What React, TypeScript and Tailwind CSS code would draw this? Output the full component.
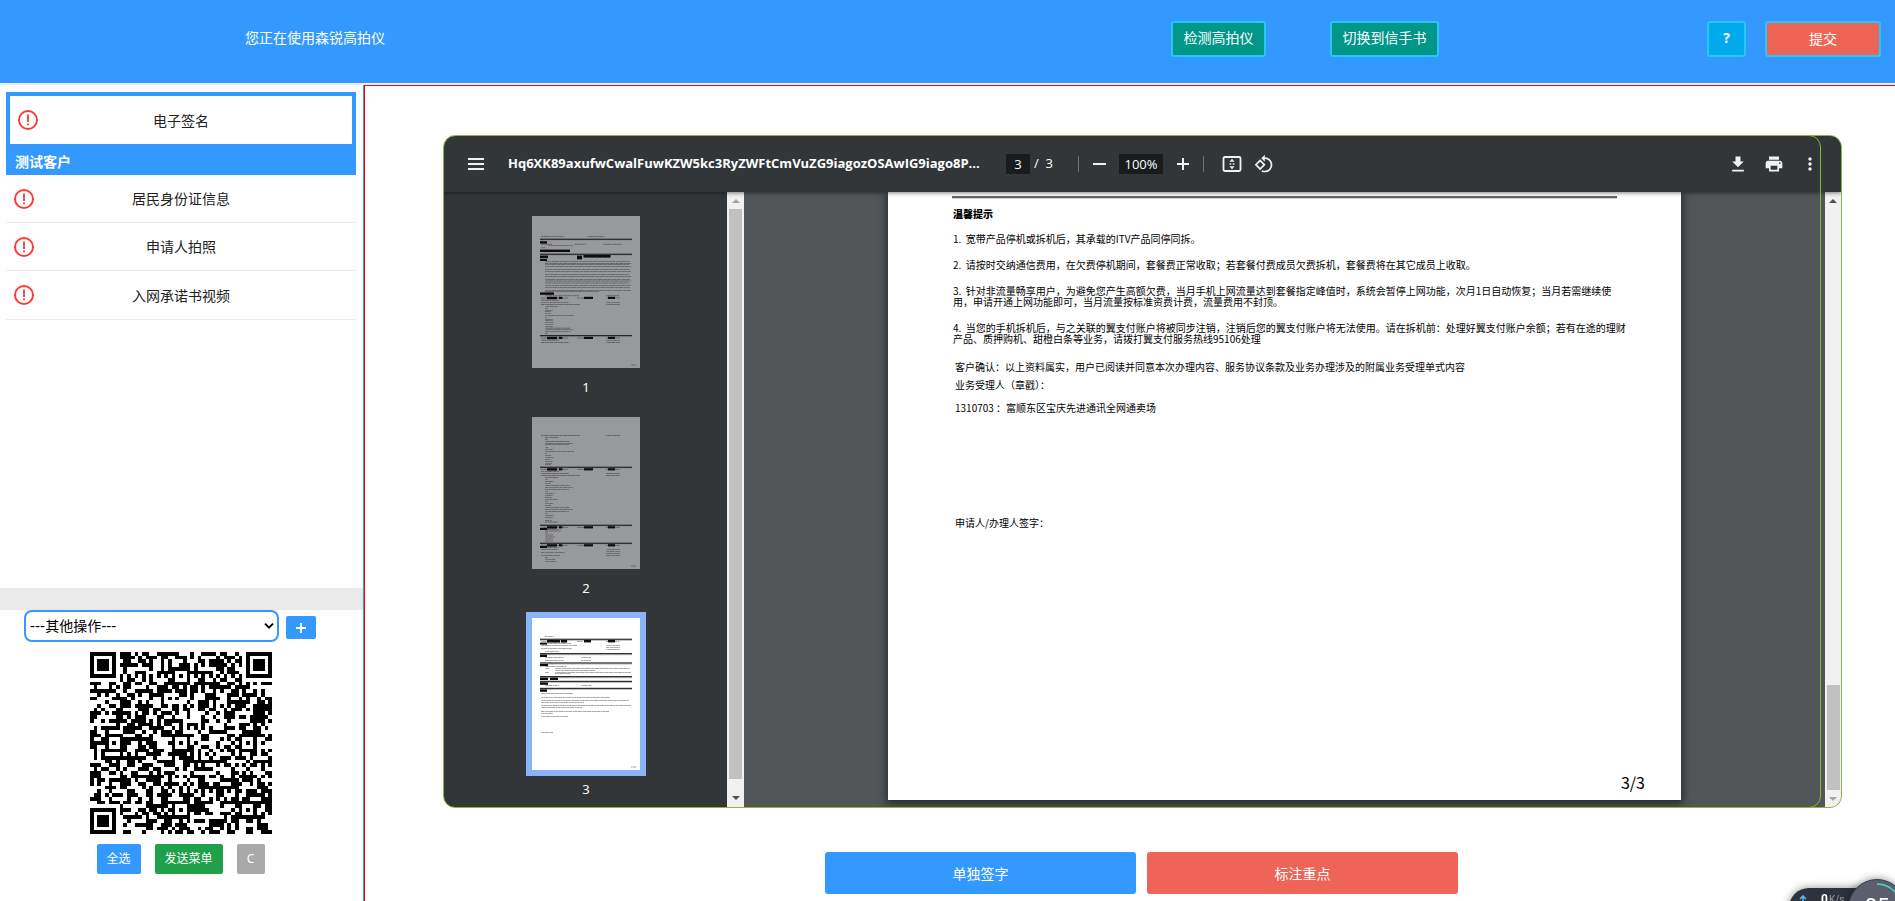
import React from "react";

type Bar = [x: number, y: number, w: number];
type Blob = [x: number, y: number, w: number, h: number];
type ThumbData = { rules: number[]; blobs: Blob[]; lines: Bar[] };

const steps = (xs: number, ys: number[], ws: number[]): Bar[] =>
  ys.map((y, i) => [xs, y, ws[i % ws.length]]);

const block = (y: number): Blob[] => [
  [15, y, 10, 2.4],
  [27, y, 3.4, 2.2],
  [52, y, 9, 2.2],
  [76, y, 7, 2.2],
];

const blockLines = (y: number): Bar[] => [
  [9, y + 1.2, 27],
  [45, y + 1.2, 7],
  [74, y + 1.2, 14],
  [9, y + 3.4, 18],
];

const thumbs: ThumbData[] = [
  {
    rules: [23.3, 38.3, 119.7],
    blobs: [
      [8, 25.2, 7, 2.4],
      [8, 33.6, 30, 2.4],
      [8, 39.6, 8, 2.6],
      [45, 39.6, 5, 3.8],
      [51.5, 39, 27, 2.6],
      [8, 43, 7, 2],
      [8, 76.4, 14, 2.4],
      ...block(80.8),
      ...block(120.8),
    ],
    lines: [
      [9, 20.5, 23],
      [55.5, 20.5, 17],
      [9, 28.3, 11],
      [16, 29.4, 25],
      [42, 28.3, 12],
      [71, 28.3, 19],
      [9, 31.7, 4],
      ...steps(13, [45.4, 47.5, 48.6, 50.6, 53.4, 55.4, 58.4, 60.6, 63.4, 65, 67, 69.4, 71.4, 74.4], [85, 86, 84, 86]),
      [13, 75.6, 54],
      [13, 79.7, 34],
      [74, 79.7, 13],
      ...blockLines(80.8),
      [9, 86.4, 28],
      [74, 86.4, 14],
      [9, 88.5, 39],
      [74, 88.5, 14],
      ...steps(13, [90.4, 92.4, 94.4, 95.4, 97.4, 99.4, 101.4, 103.4, 104.4, 106.4, 108.4, 110.4, 112.2, 113.6, 115.4, 117.4], [13, 3, 8, 6, 6, 29, 2, 8, 8, 9, 8, 8, 25, 28, 26, 3]),
      ...blockLines(120.8),
      [9, 126.5, 28],
      [74, 124.4, 14],
      [74, 126.5, 14],
      [99, 149, 5],
    ],
  },
  {
    rules: [50.3, 108.3, 126.3],
    blobs: [...block(51.2), ...block(109.2), [8, 111, 7, 2], ...block(127.2), [8, 129, 7, 2]],
    lines: [
      [9, 18.5, 39],
      [74, 18.5, 14],
      ...steps(13, [20.5, 22.5, 24.5, 26.4, 27.6, 30.4, 32.4, 34.4, 36.4, 38.4, 40.4, 42.4, 44.4, 46.4, 47.6], [13, 3, 25, 28, 24, 3, 8, 29, 2, 6, 9, 6, 8, 7, 6]),
      ...blockLines(51.2),
      [9, 56.5, 28],
      [74, 56.5, 14],
      [9, 58.5, 39],
      [74, 58.5, 14],
      ...steps(13, [60.5, 62.5, 64.5, 66.4, 68.4, 70.4, 72.4, 74.4, 76.4, 78.4, 80.4, 82.4, 84.4, 86.4, 88.4, 90.4, 92.4, 94.4, 96.4, 98.4, 100.4, 103.4, 105], [13, 3, 8, 6, 25, 28, 24, 3, 9, 8, 7]),
      ...blockLines(109.2),
      ...steps(13, [114, 116, 118, 120, 122, 124], [16, 3, 8, 10, 8, 8]),
      ...blockLines(127.2),
      [9, 132.4, 17],
      [9, 135.4, 24],
      [9, 138.4, 19],
      ...steps(74, [132.4, 134.4, 136.4, 138.4], [14]),
      ...steps(13, [140.4, 142.4, 144.4], [3, 10, 11]),
      [99, 149, 5],
    ],
  },
  {
    rules: [21.3, 35.7, 45, 58.7, 63.4, 70.4],
    blobs: [
      [15, 22, 13, 2.6],
      [29, 22, 6, 2.6],
      [52, 22, 7, 2.4],
      [76, 22, 7, 2.4],
      [8, 24.6, 7, 2],
      [8, 36.6, 7, 2.4],
      [8, 46, 8, 2.2],
      [8, 59.6, 8, 2.4],
      [18, 59.6, 8, 2.4],
      [8, 64.4, 8, 2.4],
      [8, 71.4, 7, 2.4],
    ],
    lines: [
      [13, 18.4, 9],
      [9, 23.4, 27],
      [45, 23.4, 6],
      [74, 23.4, 14],
      [15, 25.4, 24],
      [9, 27.4, 36],
      [9, 30.4, 31],
      ...steps(74, [27.4, 29.4, 31.4], [14]),
      [13, 33.4, 14],
      [13, 39.4, 19],
      [49, 39.4, 10],
      [13, 42.4, 19],
      [49, 42.4, 10],
      [13, 48.4, 22],
      [13, 50.4, 4],
      [23, 50.6, 75],
      [23, 52.4, 40],
      [13, 54.4, 4],
      [23, 54.4, 76],
      [23, 55.6, 16],
      [13, 67.4, 14],
      [49, 67.4, 10],
      [9, 75.4, 32],
      [9, 79.4, 69],
      [9, 82.4, 88],
      [9, 84.4, 43],
      [9, 87.4, 90],
      [9, 89.4, 41],
      [9, 93.4, 68],
      [9, 95.4, 12],
      [9, 98.4, 27],
      [9, 114.4, 12],
      [99, 149, 5],
    ],
  },
];

function Thumb({ data, page, active }: { data: ThumbData; page: number; active?: boolean }) {
  return (
    <svg
      viewBox="0 0 108 152"
      role="img"
      aria-label={`第${page}页`}
      className={`block h-[152px] w-[108px] ${active ? "bg-white" : "bg-[#98999b]"}`}
    >
      {data.lines.map(([x, y, w], i) => (
        <line
          key={i}
          x1={x}
          x2={x + w}
          y1={y}
          y2={y}
          stroke="#222"
          strokeWidth="0.8"
          strokeDasharray="2.6 0.4 4.2 0.5 1.4 0.3"
          strokeDashoffset={i * 1.7}
          opacity="0.55"
        />
      ))}
      {data.rules.map((y) => (
        <g key={y}>
          <rect x="8" y={y + 0.4} width="92" height="1.1" fill="#888" opacity="0.6" />
          <rect x="8" y={y - 0.6} width="92" height="1.1" fill="#1b1b1b" />
        </g>
      ))}
      {data.blobs.map(([x, y, w, h], i) => (
        <rect key={i} x={x} y={y} width={w} height={h} fill="#0d0d0d" />
      ))}
    </svg>
  );
}

const QR_SIZE = 49;

function buildQr(): string {
  let seed = 20231;
  const rand = () => {
    seed = (seed * 1103515245 + 12345) % 2147483648;
    return seed / 2147483648;
  };
  const centres = [6, 24, 42];
  const cell = (r: number, c: number): boolean => {
    const noise = rand() < 0.52;
    for (const [fr, fc] of [[3, 3], [3, 45], [45, 3]]) {
      const d = Math.max(Math.abs(r - fr), Math.abs(c - fc));
      if (d <= 4) return d === 3 || d <= 1;
    }
    for (const ar of centres) {
      for (const ac of centres) {
        if ((ar === 6 && ac !== 24) || (ac === 6 && ar !== 24)) continue;
        const d = Math.max(Math.abs(r - ar), Math.abs(c - ac));
        if (d <= 2) return d !== 1;
      }
    }
    if (r === 6) return c % 2 === 0;
    if (c === 6) return r % 2 === 0;
    return noise;
  };
  let path = "";
  for (let r = 0; r < QR_SIZE; r++) {
    for (let c = 0; c < QR_SIZE; c++) {
      if (cell(r, c)) path += `M${c} ${r}h1v1h-1z`;
    }
  }
  return path;
}

const qrPath = buildQr();

function AlertIcon() {
  return (
    <svg viewBox="0 0 20 20" className="size-5 shrink-0" aria-hidden="true" fill="none" stroke="#fb3939">
      <circle cx="10" cy="10" r="9" strokeWidth="1.9" />
      <path d="M10 4.6v7.4M10 13.4v1.8" strokeWidth="1.8" />
    </svg>
  );
}

function ToolIcon({ d, label }: { d: string; label: string }) {
  return (
    <button type="button" aria-label={label} className="flex size-5 items-center justify-center">
      <svg viewBox="0 0 24 24" className="size-5" fill="#f1f1f1" aria-hidden="true">
        <path d={d} />
      </svg>
    </button>
  );
}

function Arrow({ down, dim }: { down?: boolean; dim?: boolean }) {
  return (
    <svg viewBox="0 0 8 4" className="h-1 w-2" fill={dim ? "#a3a3a3" : "#505050"} aria-hidden="true">
      <path d={down ? "M0 0h8L4 4z" : "M0 4h8L4 0z"} />
    </svg>
  );
}

const tasks = ["居民身份证信息", "申请人拍照", "入网承诺书视频"];

function Sidebar() {
  return (
    <aside className="flex w-[364px] shrink-0 flex-col border-r border-[#3399ff] bg-[#fefefe]">
      <div className="flex-1 pt-[7px] pr-[7px] pl-[6px]">
        <div className="bg-[#3399ff] p-1 pb-0">
          <button type="button" className="flex h-12 w-full items-center bg-white pr-7 pl-2 text-[14px]">
            <AlertIcon />
            <span className="flex-1">电子签名</span>
          </button>
          <h2 className="flex h-[31px] items-center pt-1 pl-[5px] text-[14px] font-bold text-white">测试客户</h2>
        </div>
        <ul>
          {tasks.map((t) => (
            <li key={t} className="h-12 border-b border-[#ececec] last:h-[49px]">
              <button type="button" className="flex h-full w-full items-center pr-7 pl-2 text-[14px]">
                <AlertIcon />
                <span className="flex-1">{t}</span>
              </button>
            </li>
          ))}
        </ul>
      </div>
      <div className="h-[22px] bg-[#eaeaea]" />
      <div className="flex items-center pl-6">
        <div className="relative">
          <select
            aria-label="其他操作"
            className="block h-8 w-[255px] appearance-none rounded-lg border-2 border-[#3399ff] bg-white pl-1 font-['DejaVu_Sans','Noto_Sans_CJK_SC',sans-serif] text-[14px] text-black"
          >
            <option>---其他操作---</option>
          </select>
          <svg viewBox="0 0 10 8" className="pointer-events-none absolute top-3 right-[5px] h-2 w-[10px]" fill="none" stroke="#000" strokeWidth="2" aria-hidden="true">
            <path d="M1 1.6l4 4 4-4" />
          </svg>
        </div>
        <button type="button" aria-label="添加" className="mt-[3px] ml-[7px] flex h-[23px] w-[30px] items-center justify-center rounded-xs bg-[#3399ff]">
          <svg viewBox="0 0 10 10" className="size-[10px]" stroke="#fff" strokeWidth="1.8" aria-hidden="true">
            <path d="M5 0v10M0 5h10" />
          </svg>
        </button>
      </div>
      <div className="flex flex-col items-center pt-[10px] pr-[2px] pb-[27px]">
        <svg viewBox="0 0 49 49" shapeRendering="crispEdges" className="size-[182px] bg-white" role="img" aria-label="二维码">
          <path d={qrPath} fill="#000" />
        </svg>
        <div className="mt-[10px] flex gap-[14px] text-[12px] text-white">
          <button type="button" className="h-[30px] w-11 rounded-xs bg-[#3399ff]">全选</button>
          <button type="button" className="h-[30px] w-[68px] rounded-xs bg-[#1fa04a]">发送菜单</button>
          <button type="button" className="h-[30px] w-7 rounded-xs bg-[#a9a9a9]">C</button>
        </div>
      </div>
    </aside>
  );
}

function Toolbar() {
  return (
    <div className="relative z-10 flex h-14 shrink-0 items-center bg-[#323639] pr-[21px] pl-[22px] font-['Open_Sans','Noto_Sans',sans-serif] text-[13px] text-white shadow-[0_1px_4px_rgba(0,0,0,0.5)]">
      <button type="button" aria-label="菜单" className="flex size-5 items-center justify-center">
        <svg viewBox="0 0 20 20" className="size-5" fill="#f1f1f1" aria-hidden="true">
          <path d="M2 4h16v2H2zM2 9h16v2H2zM2 14h16v2H2z" />
        </svg>
      </button>
      <span className="ml-[22px] w-[474px] font-bold whitespace-nowrap">
        Hq6XK89axufwCwalFuwKZW5kc3RyZWFtCmVuZG9iagozOSAwIG9iago8P...
      </span>
      <input aria-label="页码" defaultValue="3" className="ml-6 h-5 w-6 bg-[#191b1c] text-center" />
      <span className="ml-1 w-[30px] whitespace-pre">/&nbsp; 3</span>
      <span className="ml-[14px] h-4 w-px bg-[#707376]" />
      <button type="button" aria-label="缩小" className="ml-[10px] flex size-5 items-center justify-center">
        <svg viewBox="0 0 20 20" className="size-5" fill="#f1f1f1" aria-hidden="true"><path d="M4 9h13v2H4z" /></svg>
      </button>
      <input aria-label="缩放" defaultValue="100%" className="ml-[10px] h-5 w-11 bg-[#191b1c] text-center" />
      <button type="button" aria-label="放大" className="ml-[10px] flex size-5 items-center justify-center">
        <svg viewBox="0 0 20 20" className="size-5" fill="#f1f1f1" aria-hidden="true"><path d="M4 9h5V4h2v5h5v2h-5v5H9v-5H4z" /></svg>
      </button>
      <span className="ml-[10px] h-4 w-px bg-[#707376]" />
      <button type="button" aria-label="适合页面大小" className="ml-[18px] flex size-5 items-center justify-center">
        <svg viewBox="0 0 20 20" className="size-5" aria-hidden="true">
          <rect x="1.5" y="3" width="17" height="14" rx="1.4" fill="none" stroke="#f1f1f1" strokeWidth="1.8" />
          <path d="M10 4.8l2.6 2.9H7.4zM10 15.2l2.6-2.9H7.4zM7.6 9.2h1.6v1.6H7.6zM10.8 9.2h1.6v1.6h-1.6z" fill="#f1f1f1" />
        </svg>
      </button>
      <div className="ml-3 flex-1">
        <ToolIcon
          label="逆时针旋转"
          d="M7.34 6.41L.86 12.9l6.49 6.48 6.49-6.48-6.5-6.49zM3.69 12.9l3.66-3.66L11 12.9l-3.66 3.66-3.65-3.66zm15.67-6.26C17.61 4.88 15.3 4 13 4V.76L8.76 5 13 9.24V6c1.79 0 3.58.68 4.95 2.05 2.73 2.73 2.73 7.17 0 9.9C16.58 19.32 14.79 20 13 20c-.97 0-1.94-.21-2.84-.61l-1.49 1.49C10.02 21.62 11.51 22 13 22c2.3 0 4.61-.88 6.36-2.64 3.52-3.51 3.52-9.21 0-12.72z"
        />
      </div>
      <div className="flex gap-4">
        <ToolIcon label="下载" d="M5 21h14v-2H5v2zM19 9h-4V3H9v6H5l7 7 7-7z" />
        <ToolIcon
          label="打印"
          d="M19 8H5c-1.66 0-3 1.34-3 3v6h4v4h12v-4h4v-6c0-1.66-1.34-3-3-3zm-3 11H8v-5h8v5zm3-7c-.55 0-1-.45-1-1s.45-1 1-1 1 .45 1 1-.45 1-1 1zm-1-9H6v4h12V3z"
        />
        <ToolIcon
          label="更多"
          d="M12 8c1.1 0 2-.9 2-2s-.9-2-2-2-2 .9-2 2 .9 2 2 2zm0 2c-1.1 0-2 .9-2 2s.9 2 2 2 2-.9 2-2-.9-2-2-2zm0 6c-1.1 0-2 .9-2 2s.9 2 2 2 2-.9 2-2-.9-2-2-2z"
        />
      </div>
    </div>
  );
}

function ThumbPane() {
  return (
    <div className="flex w-[300px] shrink-0 bg-[#323639]">
      <ol className="flex flex-1 flex-col items-center pt-6 pl-px font-['Noto_Sans',sans-serif] text-[13px] text-white">
        {thumbs.map((t, i) => {
          const active = i === 2;
          return (
            <li key={i} className={`flex flex-col items-center ${active ? "-mt-[6px]" : "h-[201px]"}`}>
              <a href={`#page-${i + 1}`} className={active ? "border-[6px] border-[#8ab4f8]" : ""}>
                <Thumb data={t} page={i + 1} active={active} />
              </a>
              <span className={`leading-5 ${active ? "mt-[3px]" : "mt-[9px]"}`}>{i + 1}</span>
            </li>
          );
        })}
      </ol>
      <div className="flex w-[17px] flex-col items-center bg-[#f1f1f1]" aria-hidden="true">
        <div className="flex h-[17px] items-center"><Arrow dim /></div>
        <div className="w-[13px] flex-1 bg-[#c1c1c1]" />
        <div className="flex h-7 items-end pb-[7px]"><Arrow down /></div>
      </div>
    </div>
  );
}

function DocumentPage() {
  return (
    <article className="mb-[7px] flex w-[793px] flex-col bg-white pl-16 pt-1 font-['Noto_Sans_CJK_SC',sans-serif] text-[10px] leading-[11px] text-black shadow-[0_2px_8px_2px_rgba(0,0,0,0.5)]">
      <hr className="mr-16 h-[3px] border-t-2 border-b border-t-[#666] border-b-[#cfcfc4]" />
      <h1 className="mt-[9px] pl-px text-[10px] font-black">温馨提示</h1>
      <div className="mt-[14px] flex flex-col gap-[15px] pl-px whitespace-nowrap">
        <p>1.&nbsp; 宽带产品停机或拆机后，其承载的ITV产品同停同拆。</p>
        <p>2.&nbsp; 请按时交纳通信费用，在欠费停机期间，套餐费正常收取；若套餐付费成员欠费拆机，套餐费将在其它成员上收取。</p>
        <p>
          3.&nbsp; 针对非流量畅享用户，为避免您产生高额欠费，当月手机上网流量达到套餐指定峰值时，系统会暂停上网功能，次月1日自动恢复；当月若需继续使
          <br />
          用，申请开通上网功能即可，当月流量按标准资费计费，流量费用不封顶。
        </p>
        <p>
          4.&nbsp; 当您的手机拆机后，与之关联的翼支付账户将被同步注销，注销后您的翼支付账户将无法使用。请在拆机前：处理好翼支付账户余额；若有在途的理财
          <br />
          产品、质押购机、甜橙白条等业务，请拨打翼支付服务热线95106处理
        </p>
      </div>
      <div className="flex flex-1 flex-col pl-[3px] whitespace-nowrap">
        <p className="mt-[17px]">客户确认：以上资料属实，用户已阅读并同意本次办理内容、服务协议条款及业务办理涉及的附属业务受理单式内容</p>
        <p className="mt-[7px]">业务受理人（章戳）：</p>
        <p className="mt-3">1310703 ：富顺东区宝庆先进通讯全网通卖场</p>
        <p className="mt-[104px]">申请人/办理人签字：</p>
      </div>
      <p className="pr-9 pb-2 text-right text-[16px] leading-5">3/3</p>
    </article>
  );
}

function Viewer() {
  return (
    <section className="relative flex flex-1 flex-col overflow-hidden rounded-[12px] border border-[#8bb83c]">
      <Toolbar />
      <div className="flex flex-1 bg-[#525659]">
        <ThumbPane />
        <div className="flex flex-1 justify-center">
          <DocumentPage />
        </div>
        <div className="flex w-4 flex-col items-center bg-[#f1f1f1]" aria-hidden="true">
          <div className="flex h-[17px] items-center"><Arrow /></div>
          <div className="flex-1" />
          <div className="h-[105px] w-[13px] bg-[#c1c1c1]" />
          <div className="flex h-[17px] items-center"><Arrow down dim /></div>
        </div>
      </div>
      <div className="pointer-events-none absolute -inset-y-px right-5 -left-px z-20 rounded-[12px] border border-[#8bb83c]" />
    </section>
  );
}

function SpeedWidget() {
  return (
    <div className="pointer-events-none fixed right-0 bottom-0 h-8 w-28 overflow-hidden font-['Roboto',sans-serif]">
      <div className="absolute top-[19px] left-[6px] h-10 w-28 rounded-full bg-[#2f323d] shadow-[0_0_8px_rgba(0,0,0,0.45)]">
        <svg viewBox="0 0 8 9" className="absolute top-[7px] left-[10px] h-[9px] w-2" fill="none" stroke="#4db8ff" strokeWidth="1.6" aria-hidden="true">
          <path d="M4 9V1M1 4l3-3 3 3" />
        </svg>
        <span className="absolute top-[5px] left-8 text-[12px] leading-3 text-white">
          <b>0</b>
          <span className="ml-px text-[10px] text-[#9a9ca5]">K/s</span>
        </span>
      </div>
      <div className="absolute top-[10px] left-[65px] flex size-[58px] justify-center rounded-full border border-[#3b3e49] bg-[#5b5f6d] pt-[15px] text-[22px] leading-6 text-white shadow-[0_0_8px_rgba(0,0,0,0.45)]">
        <svg viewBox="0 0 56 56" className="absolute inset-0 size-14" fill="none" stroke="#3fdcc8" strokeWidth="1.6" aria-hidden="true">
          <path d="M28 4a24 24 0 0 1 24 24" />
        </svg>
        <span>85</span>
      </div>
    </div>
  );
}

export default function App() {
  return (
    <div className="flex min-h-screen flex-col bg-white font-['Noto_Sans','Noto_Sans_CJK_SC',sans-serif] text-[#222]">
      <header className="flex h-[85px] shrink-0 items-start border-b-2 border-[#ececec] bg-[#3399ff] pt-[21px] pr-[14px] pl-[245px] text-[14px] text-white">
        <p className="flex-1 leading-[34px]">您正在使用森锐高拍仪</p>
        <button type="button" className="h-9 w-[95px] rounded-[3px] border-2 border-[#2cc5f7] bg-[#009688] pb-[2px] leading-none">检测高拍仪</button>
        <button type="button" className="ml-16 h-9 w-[109px] rounded-[3px] border-2 border-[#2cc5f7] bg-[#009688] pb-[2px] leading-none">切换到信手书</button>
        <button type="button" className="ml-[268px] h-9 w-[39px] rounded-[3px] border-2 border-[#2cc5f7] bg-[#01aaed] pb-[2px] leading-none font-bold">?</button>
        <button type="button" className="ml-[19px] h-9 w-[116px] rounded-[3px] border-2 border-[#2cc5f7] bg-[#ee6557] leading-none">提交</button>
      </header>
      <div className="flex flex-1">
        <Sidebar />
        <main className="flex flex-1 flex-col border-t border-l border-[#ff0000] pt-[49px] pr-[53px] pb-[7px] pl-[78px]">
          <Viewer />
          <div className="mt-11 flex justify-center gap-[11px] pr-[2px] text-[14px] text-white">
            <button type="button" className="h-[42px] w-[311px] rounded-[3px] bg-[#3399ff]">单独签字</button>
            <button type="button" className="h-[42px] w-[311px] rounded-[3px] bg-[#ee6557]">标注重点</button>
          </div>
        </main>
      </div>
      <SpeedWidget />
    </div>
  );
}
